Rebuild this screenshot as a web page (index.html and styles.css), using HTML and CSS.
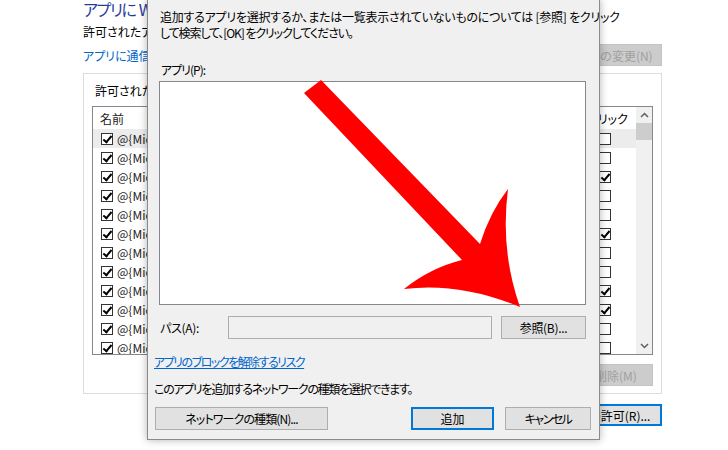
FILE: index.html
```html
<!DOCTYPE html>
<html lang="ja">
<head>
  <meta charset="UTF-8">
  <title>許可されたアプリ - アプリの追加</title>
  <link rel="stylesheet" href="styles.css">
</head>
<body>

<div class="window">
  <h1 class="title">アプリに Windows ファイアウォール経由の通信を許可</h1>
  <p class="sub">許可されたアプリおよびポートを追加、変更、または削除します。</p>
  <div class="link-row">
    <a class="link" href="#">アプリに通信を許可することの危険性</a>
    <button class="btn btn-disabled btn-settings">設定の変更(N)</button>
  </div>

  <div class="group">
    <div class="group-label">許可されたアプリおよび機能(A):</div>
    <div class="list">
      <div class="list-body">
        <div class="row head">
          <div class="c-name">名前</div>
          <div class="c-priv">プライベート</div>
          <div class="c-pub">パブリック</div>
        </div>
        <div class="row selected">
          <div class="c-name"><span class="cb on"></span>@{Microsoft.AAD.BrokerPlugin_1000}</div>
          <div class="c-priv"><span class="cb on"></span></div>
          <div class="c-pub"><span class="cb"></span></div>
        </div>
        <div class="row">
          <div class="c-name"><span class="cb on"></span>@{Microsoft.AccountsControl_10.0}</div>
          <div class="c-priv"><span class="cb on"></span></div>
          <div class="c-pub"><span class="cb"></span></div>
        </div>
        <div class="row">
          <div class="c-name"><span class="cb on"></span>@{Microsoft.BingWeather_4.25}</div>
          <div class="c-priv"><span class="cb on"></span></div>
          <div class="c-pub"><span class="cb on"></span></div>
        </div>
        <div class="row">
          <div class="c-name"><span class="cb on"></span>@{Microsoft.LockApp_10.0}</div>
          <div class="c-priv"><span class="cb on"></span></div>
          <div class="c-pub"><span class="cb"></span></div>
        </div>
        <div class="row">
          <div class="c-name"><span class="cb on"></span>@{Microsoft.MicrosoftEdge_44.18}</div>
          <div class="c-priv"><span class="cb on"></span></div>
          <div class="c-pub"><span class="cb"></span></div>
        </div>
        <div class="row">
          <div class="c-name"><span class="cb on"></span>@{Microsoft.People_10.1}</div>
          <div class="c-priv"><span class="cb on"></span></div>
          <div class="c-pub"><span class="cb on"></span></div>
        </div>
        <div class="row">
          <div class="c-name"><span class="cb on"></span>@{Microsoft.Photos_2019.19}</div>
          <div class="c-priv"><span class="cb on"></span></div>
          <div class="c-pub"><span class="cb"></span></div>
        </div>
        <div class="row">
          <div class="c-name"><span class="cb on"></span>@{Microsoft.SkypeApp_14.53}</div>
          <div class="c-priv"><span class="cb on"></span></div>
          <div class="c-pub"><span class="cb"></span></div>
        </div>
        <div class="row">
          <div class="c-name"><span class="cb on"></span>@{Microsoft.Windows.Cortana_1.13}</div>
          <div class="c-priv"><span class="cb on"></span></div>
          <div class="c-pub"><span class="cb on"></span></div>
        </div>
        <div class="row">
          <div class="c-name"><span class="cb on"></span>@{Microsoft.WindowsStore_11910}</div>
          <div class="c-priv"><span class="cb on"></span></div>
          <div class="c-pub"><span class="cb on"></span></div>
        </div>
        <div class="row">
          <div class="c-name"><span class="cb on"></span>@{Microsoft.XboxApp_48.58}</div>
          <div class="c-priv"><span class="cb on"></span></div>
          <div class="c-pub"><span class="cb"></span></div>
        </div>
        <div class="row">
          <div class="c-name"><span class="cb on"></span>@{Microsoft.ZuneMusic_10.19}</div>
          <div class="c-priv"><span class="cb on"></span></div>
          <div class="c-pub"><span class="cb"></span></div>
        </div>
      </div>
      <div class="scrollbar">
        <span class="sb-btn"><svg width="9" height="6" viewBox="0 0 9 6"><path d="M1 5 L4.5 1.5 L8 5" fill="none" stroke="#606060" stroke-width="1.5"/></svg></span>
        <span class="sb-thumb"></span>
        <span class="sb-space"></span>
        <span class="sb-btn"><svg width="9" height="6" viewBox="0 0 9 6"><path d="M1 1 L4.5 4.5 L8 1" fill="none" stroke="#606060" stroke-width="1.5"/></svg></span>
      </div>
    </div>
    <div class="group-actions">
      <button class="btn btn-disabled btn-delete">削除(M)</button>
    </div>
  </div>

  <div class="window-actions">
    <button class="btn btn-default btn-allow">別のアプリの許可(R)...</button>
  </div>
</div>

<div class="dialog">
  <p class="intro"><span class="intro-1">追加するアプリを選択するか、または一覧表示されていないものについては [参照] をクリック</span><br><span class="intro-2">して検索して、[OK] をクリックしてください。</span></p>
  <div class="field-label">アプリ(P):</div>
  <div class="app-list"></div>
  <div class="path-row">
    <span class="path-label">パス(A):</span>
    <div class="path-input"></div>
    <button class="btn btn-browse">参照(B)...</button>
  </div>
  <a class="link risk" href="#">アプリのブロックを解除するリスク</a>
  <p class="note">このアプリを追加するネットワークの種類を選択できます。</p>
  <div class="dialog-actions">
    <button class="btn btn-net">ネットワークの種類(N)...</button>
    <div class="dialog-actions-right">
      <button class="btn btn-default btn-add">追加</button>
      <button class="btn btn-cancel">キャンセル</button>
    </div>
  </div>
</div>

<!-- 注釈の矢印 -->
<svg class="arrow" width="728" height="450" viewBox="0 0 728 450">
  <path fill="#ff0000" d="M304 93 L321 80 L480 244 Q490 212 508 189 Q500 250 520 307 Q460 282 404 289 Q430 268 462 260 Z"/>
</svg>

</body>
</html>
```

FILE: styles.css
```css
body { margin: 0; position: relative; width: 728px; height: 450px; overflow: hidden; background: #fff; color: #000; font-family: "Noto Sans CJK JP", sans-serif; font-size: 12px; font-feature-settings: "palt"; }

.window { padding: 0 66px 0 83px; }
.title { margin: 0; font-size: 16px; font-weight: normal; line-height: 19px; color: #1f3d99; white-space: nowrap; letter-spacing: -1.4px; word-spacing: 1px; }
.sub { margin: 4px 0 0; line-height: 17px; white-space: nowrap; }
.link-row { display: flex; justify-content: space-between; align-items: center; height: 22px; margin-top: 4px; }
.link { color: #0066cc; text-decoration: none; }

.btn { font: inherit; height: 22px; padding: 0; background: #e1e1e1; border: 1px solid #adadad; color: #000; white-space: nowrap; box-sizing: border-box; }
.btn-disabled { background: #cccccc; border-color: #c4c4c4; color: #a0a0a0; }
.btn-default { border: 2px solid #0078d7; }
.btn-settings { width: 95px; }
.btn-delete { width: 74px; }
.btn-allow { width: 140px; }

.group { margin-top: 7px; border: 1px solid #dcdcdc; padding: 8px 8px 7px 8px; }
.group-label { line-height: 17px; padding-left: 3px; }
.list { display: flex; height: 249px; margin-top: 7px; border: 1px solid #828790; box-sizing: border-box; overflow: hidden; background: #fff; }
.list-body { flex: 1; min-width: 0; }
.row { display: grid; grid-template-columns: 1fr 70px 62px; align-items: center; height: 19px; }
.row.head { height: 22px; }
.row.selected { background: #ececec; }
.c-name { display: flex; align-items: center; gap: 4px; padding-left: 8px; overflow: hidden; white-space: nowrap; color: #222; }
.head .c-name { padding-left: 7px; }
.c-priv { display: flex; align-items: center; padding-left: 20px; white-space: nowrap; }
.c-pub { display: flex; align-items: center; padding-left: 25px; white-space: nowrap; }
.head .c-priv, .head .c-pub { padding-left: 2px; }

.cb { display: inline-block; position: relative; flex: none; width: 12px; height: 12px; box-sizing: border-box; border: 1px solid #333; background: #fff; }
.cb.on::after { content: ""; position: absolute; left: 3px; top: 0; width: 3px; height: 7px; border: solid #000; border-width: 0 2px 2px 0; transform: rotate(40deg); }

.scrollbar { display: flex; flex-direction: column; width: 16px; background: #f0f0f0; }
.sb-btn { display: flex; align-items: center; justify-content: center; height: 16px; }
.sb-thumb { height: 17px; background: #cdcdcd; }
.sb-space { flex: 1; }

.group-actions { display: flex; justify-content: flex-end; margin-top: 9px; }
.window-actions { display: flex; justify-content: flex-end; margin-top: 10px; }

.dialog { position: absolute; left: 147px; top: -1px; width: 453px; box-sizing: border-box; padding: 9px 0 9px; background: #f0f0f0; border: 1px solid #8a8a8a; box-shadow: 0 0 8px rgba(0, 0, 0, 0.3); }
.intro { margin: 0 0 0 12px; line-height: 16px; white-space: nowrap; }
.intro-1 { letter-spacing: -0.25px; }
.intro-2 { letter-spacing: -1.1px; }
.field-label { margin: 20px 0 0 13px; line-height: 17px; letter-spacing: -1px; }
.app-list { height: 224px; margin: 3px 13px 0 11px; background: #fff; border: 1px solid #828790; box-sizing: border-box; }
.path-row { display: flex; align-items: center; gap: 9px; height: 24px; margin: 10px 13px 0 11px; }
.path-label { width: 60px; padding-left: 1px; box-sizing: border-box; letter-spacing: -0.3px; }
.path-input { flex: 1; height: 23px; background: #f0f0f0; border: 1px solid #adadad; box-sizing: border-box; }
.btn-browse { width: 85px; height: 23px; letter-spacing: -0.3px; }
.risk { display: block; width: fit-content; margin: 14px 0 0 6px; line-height: 17px; text-decoration: underline; letter-spacing: -1.5px; }
.note { margin: 10px 0 0 6px; line-height: 17px; letter-spacing: -1.3px; }
.dialog-actions { display: flex; justify-content: space-between; margin: 10px 8px 0 7px; }
.dialog-actions-right { display: flex; gap: 11px; }
.btn-net { width: 173px; height: 23px; letter-spacing: -0.9px; }
.btn-add { width: 83px; height: 23px; }
.btn-cancel { width: 86px; height: 23px; letter-spacing: -1.5px; }

.arrow { position: absolute; left: 0; top: 0; pointer-events: none; }
```
